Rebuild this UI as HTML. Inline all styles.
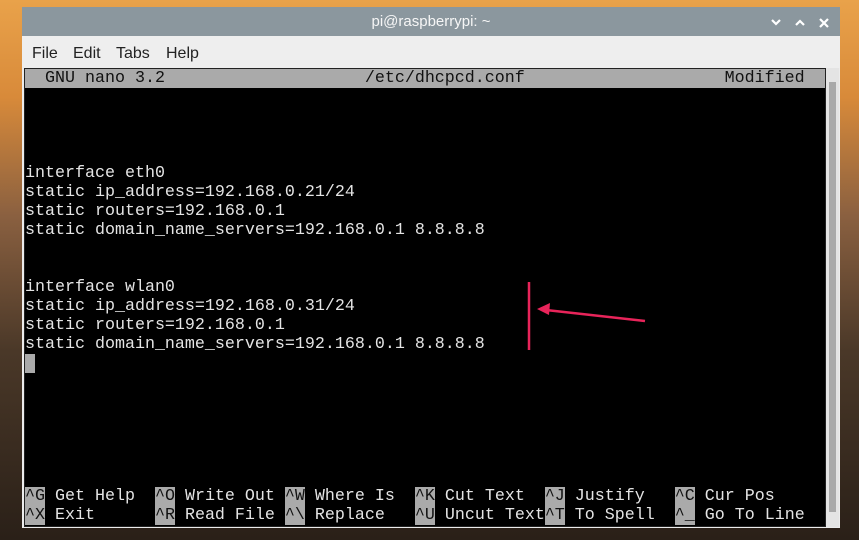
<!DOCTYPE html>
<html><head><meta charset="utf-8"><style>
*{margin:0;padding:0;box-sizing:border-box}
body{width:859px;height:540px;overflow:hidden;position:relative;
background:linear-gradient(180deg,#e9a24a 0%,#d88a3a 18%,#8a6040 40%,#4a3828 65%,#2a2018 100%);}
.win{position:absolute;left:22px;top:7px;width:818px;height:521px;background:#ececec;}
.title{position:absolute;left:0;top:0;width:818px;height:29px;background:#8b979e;color:#f6f6f6;
font:15px "Liberation Sans",sans-serif;text-align:center;line-height:30px}
.menu{position:absolute;left:0;top:29px;height:32px;width:818px;background:#eeeeee;font:16px "Liberation Sans",sans-serif;color:#222;}
.menu span{position:absolute;top:9px}
.term{position:absolute;left:24px;top:68px;width:802px;height:459px;background:#000;border:1px solid #222}
.row{position:absolute;left:0;height:19px;white-space:pre;font:16.67px/19px "Liberation Mono",monospace;color:#e4e4e4}
.hdr{background:#aaaaaa;color:#111;width:800px}
.k{background:#aaaaaa;color:#111}
.sb{position:absolute;left:826px;top:68px;width:13px;height:459px;background:#e4e4e4}
.thumb{position:absolute;left:3px;top:14px;width:7px;height:430px;background:#a9a9a9}
</style></head><body>
<div class="win">
<div class="title">pi@raspberrypi: ~
<svg style="position:absolute;left:748px;top:10px" width="60" height="12" viewBox="0 0 60 12" fill="none" stroke="#fff" stroke-width="2.2">
<path d="M2 3 L6 7 L10 3"/><path d="M26 8 L30 4 L34 8"/><path d="M50 2 L58 10 M58 2 L50 10"/></svg></div>
<div class="menu"><span style="left:10px">File</span><span style="left:51px">Edit</span><span style="left:94px">Tabs</span><span style="left:144px">Help</span></div>
</div>
<div class="term">
<div class="row hdr" style="top:0">  GNU nano 3.2                    /etc/dhcpcd.conf                    Modified  </div>
<div class="row" style="top:95px">interface eth0
static ip_address=192.168.0.21/24
static routers=192.168.0.1
static domain_name_servers=192.168.0.1 8.8.8.8</div>
<div class="row" style="top:209px">interface wlan0
static ip_address=192.168.0.31/24
static routers=192.168.0.1
static domain_name_servers=192.168.0.1 8.8.8.8</div>
<div class="row" style="top:285px;width:10px;background:#aaa"></div>
<div class="row" style="top:418px"><span class="k">^G</span> Get Help  <span class="k">^O</span> Write Out <span class="k">^W</span> Where Is  <span class="k">^K</span> Cut Text  <span class="k">^J</span> Justify   <span class="k">^C</span> Cur Pos</div>
<div class="row" style="top:437px"><span class="k">^X</span> Exit      <span class="k">^R</span> Read File <span class="k">^\</span> Replace   <span class="k">^U</span> Uncut Text<span class="k">^T</span> To Spell  <span class="k">^_</span> Go To Line</div>
</div>
<div class="sb"><div class="thumb"></div></div>
<svg style="position:absolute;left:0;top:0" width="859" height="540">
<line x1="529" y1="282" x2="529" y2="350" stroke="#e8245a" stroke-width="2.5"/>
<line x1="645" y1="321" x2="546" y2="310" stroke="#e8245a" stroke-width="2.5"/>
<path d="M537 309 L550 303 L549 315 Z" fill="#e8245a"/>
</svg>
</body></html>
